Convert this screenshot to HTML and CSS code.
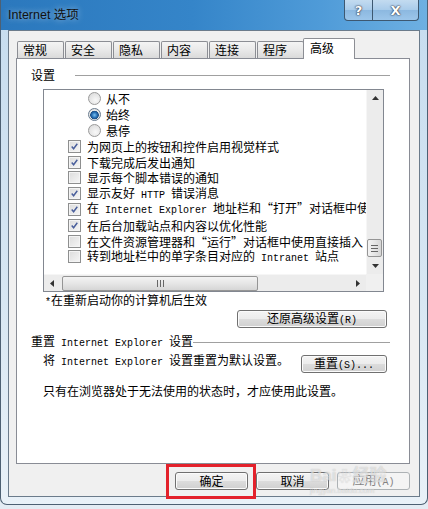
FILE: index.html
```html
<!DOCTYPE html>
<html lang="zh-CN">
<head>
    <meta charset="UTF-8">
    <title>Internet 选项</title>
    <link rel="stylesheet" href="styles.css">
</head>
<body>
    <div class="window">
        <div class="titlebar">
            <span class="title">Internet 选项</span>
            <div class="caption-btns">
                <span class="cap-btn help">?</span>
                <span class="cap-btn close">X</span>
            </div>
        </div>

        <div class="client">
            <div class="tabs">
                <div class="tab">常规</div>
                <div class="tab">安全</div>
                <div class="tab">隐私</div>
                <div class="tab">内容</div>
                <div class="tab">连接</div>
                <div class="tab">程序</div>
                <div class="tab active">高级</div>
            </div>

            <div class="panel">
                <!-- settings group -->
                <div class="group-title first">
                    <span>设置</span>
                    <i class="rule"></i>
                </div>

                <div class="listbox">
                    <div class="items">
                        <div class="row lv2"><span class="radio"></span><span class="lbl">从不</span></div>
                        <div class="row lv2"><span class="radio on"></span><span class="lbl">始终</span></div>
                        <div class="row lv2"><span class="radio"></span><span class="lbl">悬停</span></div>
                        <div class="row lv1"><span class="check"><svg viewBox="0 0 13 13"><path d="M3.2 6.6 L5.4 9.2 L9.8 3.2"/></svg></span><span class="lbl">为网页上的按钮和控件启用视觉样式</span></div>
                        <div class="row lv1"><span class="check"><svg viewBox="0 0 13 13"><path d="M3.2 6.6 L5.4 9.2 L9.8 3.2"/></svg></span><span class="lbl">下载完成后发出通知</span></div>
                        <div class="row lv1"><span class="check"></span><span class="lbl">显示每个脚本错误的通知</span></div>
                        <div class="row lv1"><span class="check"><svg viewBox="0 0 13 13"><path d="M3.2 6.6 L5.4 9.2 L9.8 3.2"/></svg></span><span class="lbl">显示友好<span class="en"> HTTP </span>错误消息</span></div>
                        <div class="row lv1"><span class="check"><svg viewBox="0 0 13 13"><path d="M3.2 6.6 L5.4 9.2 L9.8 3.2"/></svg></span><span class="lbl">在<span class="en"> Internet Explorer </span>地址栏和“打开”对话框中使用直接插入</span></div>
                        <div class="row lv1"><span class="check"><svg viewBox="0 0 13 13"><path d="M3.2 6.6 L5.4 9.2 L9.8 3.2"/></svg></span><span class="lbl">在后台加载站点和内容以优化性能</span></div>
                        <div class="row lv1"><span class="check"></span><span class="lbl">在文件资源管理器和“运行”对话框中使用直接插入</span></div>
                        <div class="row lv1"><span class="check"></span><span class="lbl">转到地址栏中的单字条目对应的<span class="en"> Intranet </span>站点</span></div>
                    </div>

                    <div class="vscroll">
                        <span class="arrow"><svg viewBox="0 0 7 4"><path d="M0 4 L3.5 0 L7 4 Z"/></svg></span>
                        <span class="track"></span>
                        <span class="vthumb"><i></i><i></i><i></i></span>
                        <span class="arrow"><svg viewBox="0 0 7 4"><path d="M0 0 L3.5 4 L7 0 Z"/></svg></span>
                    </div>

                    <div class="hscroll">
                        <span class="arrow"><svg viewBox="0 0 4 7"><path d="M4 0 L0 3.5 L4 7 Z"/></svg></span>
                        <span class="hthumb"><i></i><i></i><i></i></span>
                        <span class="track"></span>
                        <span class="arrow"><svg viewBox="0 0 4 7"><path d="M0 0 L4 3.5 L0 7 Z"/></svg></span>
                    </div>
                    <div class="corner"></div>
                </div>

                <p class="note"><span class="en">*</span>在重新启动你的计算机后生效</p>

                <div class="btn-line">
                    <button class="btn wide">还原高级设置<span class="en">(R)</span></button>
                </div>

                <!-- reset group -->
                <div class="group-title">
                    <span>重置<span class="en"> Internet Explorer </span>设置</span>
                    <i class="rule"></i>
                </div>

                <div class="reset-row">
                    <p>将<span class="en"> Internet Explorer </span>设置重置为默认设置。</p>
                    <button class="btn reset">重置<span class="en">(S)...</span></button>
                </div>

                <p class="hint">只有在浏览器处于无法使用的状态时，才应使用此设置。</p>
            </div>

            <div class="dialog-buttons">
                <button class="btn">确定</button>
                <button class="btn">取消</button>
                <button class="btn" disabled>应用<span class="en">(A)</span></button>
            </div>
        </div>
    </div>

    <div class="highlight"></div>
    <div class="watermark">Bai<span class="paw">❀</span>经验<small>jingyan.baidu.com</small></div>
</body>
</html>
```

FILE: styles.css
```css
* {
    margin: 0;
    padding: 0;
    box-sizing: border-box;
}

body {
    width: 428px;
    height: 509px;
    overflow: hidden;
    position: relative;
    background-color: #e4ecf4;
    color: #000;
    font-family: "Noto Sans CJK SC", sans-serif;
    font-size: 12px;
}

.en {
    font-family: "Liberation Mono", monospace;
    font-size: 10px;
}

.window {
    height: 505px;
    border: 1px solid #4d6073;
    border-top: none;
    border-radius: 0 0 7px 7px;
    background: linear-gradient(180deg, #c6dcef 0, #d8e7f3 60%, #e9f1f8 100%);
    overflow: hidden;
}

.titlebar {
    height: 30px;
    display: flex;
    justify-content: space-between;
    align-items: flex-start;
    background: linear-gradient(90deg, #2b78bd 0, #3585c9 45%, #4f9bd8 75%, #6eb0e2 100%);
}

.title {
    padding: 7px 0 0 7px;
    font-family: "Liberation Sans", "Noto Sans CJK SC", sans-serif;
    font-size: 12.5px;
    line-height: 16px;
    color: #111;
    text-shadow: 0 0 6px rgba(255, 255, 255, 0.6);
}

.caption-btns {
    display: flex;
    margin-right: 8px;
}

.cap-btn {
    height: 21px;
    display: flex;
    align-items: center;
    justify-content: center;
    border: 1px solid #3d5871;
    border-top: none;
    background: linear-gradient(180deg, #c3dbf0 0, #a8cbea 50%, #8cb8e0 51%, #9cc6ea 100%);
    color: #fff;
    font-family: "DejaVu Sans", sans-serif;
    font-weight: bold;
    font-size: 13px;
    text-shadow: 0 0 1px #223, 0 0 2px #223;
}

.cap-btn.help {
    width: 29px;
    border-radius: 0 0 0 4px;
}

.cap-btn.close {
    width: 46px;
    border-left: none;
    border-radius: 0 0 4px 0;
}

.client {
    margin-left: 7px;
    width: 412px;
    height: 467px;
    border: 1px solid #6b7b8b;
    background-color: #f0f0f0;
    padding: 7px 0 0 7px;
}

/* tab strip */
.tabs {
    display: flex;
    align-items: flex-end;
    height: 20px;
    padding-left: 1px;
}

.tab {
    width: 47px;
    height: 17px;
    margin-right: 1px;
    padding-left: 5px;
    border: 1px solid #8c8e94;
    border-bottom: none;
    border-radius: 2px 2px 0 0;
    background: linear-gradient(180deg, #f4f4f4 0, #e9e9e9 50%, #dadada 100%);
    line-height: 15px;
}

.tab.active {
    width: 52px;
    height: 21px;
    margin-left: -2px;
    margin-bottom: -1px;
    padding-left: 6px;
    background: #fff;
    line-height: 17px;
    position: relative;
    z-index: 1;
}

.panel {
    width: 394px;
    height: 406px;
    border: 1px solid #898c95;
    background-color: #fff;
}

.group-title {
    display: flex;
    align-items: center;
    height: 16px;
    margin-top: 6px;
    padding-left: 14px;
    padding-right: 19px;
    line-height: 16px;
    white-space: nowrap;
}

.group-title.first {
    margin-top: 8px;
}

.group-title.first .rule {
    margin-left: 20px;
}

.rule {
    flex: 1;
    height: 1px;
    background-color: #a0a0a0;
}

/* list with scrollbars */
.listbox {
    display: grid;
    grid-template-columns: 1fr 17px;
    grid-template-rows: 1fr 17px;
    width: 341px;
    height: 203px;
    margin: 6px 0 0 26px;
    border: 1px solid #828790;
}

.items {
    overflow: hidden;
    padding-top: 1px;
}

.row {
    display: flex;
    align-items: center;
    height: 15.8px;
    white-space: nowrap;
    line-height: 15px;
}

.lbl {
    white-space: pre;
}

.row.lv1 {
    padding-left: 24px;
}

.row.lv2 {
    padding-left: 44px;
}

.check {
    flex: none;
    width: 13px;
    height: 13px;
    margin-right: 6px;
    border: 1px solid #8e8f8f;
    background: linear-gradient(135deg, #dcdcdc 0, #f6f6f6 100%);
    box-shadow: inset 0 0 0 1px #f4f4f4;
}

.check svg {
    display: block;
    width: 11px;
    height: 11px;
}

.check path {
    fill: none;
    stroke: #4a5f9c;
    stroke-width: 1.7;
}

.radio {
    flex: none;
    width: 13px;
    height: 13px;
    margin-right: 5px;
    border: 1px solid #9a9a9a;
    border-radius: 50%;
    background: radial-gradient(circle at 60% 65%, #f8f8f8 0, #e6e6e6 55%, #d4d4d4 100%);
}

.radio.on {
    border-color: #6b7d90;
    background: radial-gradient(circle at 50% 55%, #7cc3f2 0, #2a72b8 2.5px, #1d4f86 4px, #e9e9e9 4.6px, #d8d8d8 100%);
}

.vscroll {
    display: flex;
    flex-direction: column;
    background-color: #ececec;
    border-left: 1px solid #f6f6f6;
}

.vscroll .arrow,
.hscroll .arrow {
    flex: none;
    display: flex;
    align-items: center;
    justify-content: center;
    width: 16px;
    height: 16px;
}

.vscroll svg {
    width: 7px;
    height: 4px;
    fill: #333;
}

.hscroll svg {
    width: 4px;
    height: 7px;
    fill: #333;
}

.track {
    flex: 1;
}

.vthumb {
    flex: none;
    display: flex;
    flex-direction: column;
    align-items: center;
    justify-content: center;
    gap: 2px;
    height: 18px;
    margin: 0 1px 1px 0;
    border: 1px solid #959595;
    border-radius: 2px;
    background: linear-gradient(90deg, #f3f3f3 0, #e6e6e6 50%, #d6d6d6 100%);
}

.vthumb i {
    display: block;
    width: 7px;
    height: 1px;
    background-color: #666;
}

.hscroll {
    display: flex;
    align-items: center;
    background-color: #ececec;
    border-top: 1px solid #f6f6f6;
}

.hthumb {
    flex: none;
    display: flex;
    align-items: center;
    justify-content: center;
    gap: 2px;
    width: 196px;
    height: 15px;
    margin-left: 2px;
    border: 1px solid #959595;
    border-radius: 2px;
    background: linear-gradient(180deg, #f3f3f3 0, #e6e6e6 50%, #d6d6d6 100%);
}

.hthumb i {
    display: block;
    width: 1px;
    height: 7px;
    background-color: #666;
}

.corner {
    background-color: #f0f0f0;
}

.note {
    height: 16px;
    line-height: 16px;
    padding-left: 28px;
}

.btn-line {
    display: flex;
    justify-content: flex-end;
    margin-top: 2px;
    padding-right: 22px;
}

.btn {
    height: 18px;
    border: 1px solid #707070;
    border-radius: 3px;
    background: linear-gradient(180deg, #f4f4f4 0, #ececec 48%, #dcdcdc 52%, #d0d0d0 100%);
    box-shadow: inset 0 0 0 1px #fbfbfb;
    font-family: "Noto Sans CJK SC", sans-serif;
    font-size: 12px;
    line-height: 14px;
    color: #000;
}

.btn.wide {
    width: 150px;
}

.btn.reset {
    width: 86px;
    margin-top: 3px;
}

.btn:disabled {
    border-color: #adb2b5;
    background: #f4f4f4;
    box-shadow: none;
    color: #838383;
}

.reset-row {
    display: flex;
    justify-content: space-between;
    align-items: flex-start;
    margin-top: 2px;
    padding: 0 22px 0 26px;
}

.reset-row p {
    line-height: 16px;
    white-space: nowrap;
}

.hint {
    margin-top: 10px;
    padding-left: 26px;
    line-height: 16px;
}

.dialog-buttons {
    display: flex;
    justify-content: flex-end;
    gap: 8px;
    width: 394px;
    margin-top: 8px;
}

.dialog-buttons .btn {
    width: 73px;
}

/* red annotation frame */
.highlight {
    position: absolute;
    left: 166px;
    top: 464px;
    width: 90px;
    height: 35px;
    border: 3px solid #e3212b;
}

.watermark {
    position: absolute;
    left: 310px;
    top: 466px;
    color: rgba(255, 255, 255, 0.55);
    text-shadow: 0 0 1px rgba(110, 110, 110, 0.45);
    font-family: "Liberation Sans", "Noto Sans CJK SC", sans-serif;
    font-size: 17px;
    font-weight: bold;
    line-height: 20px;
    white-space: nowrap;
}

.watermark .paw {
    font-size: 14px;
    margin: 0 1px;
}

.watermark small {
    display: block;
    font-size: 8px;
    line-height: 10px;
    font-weight: normal;
}
```
